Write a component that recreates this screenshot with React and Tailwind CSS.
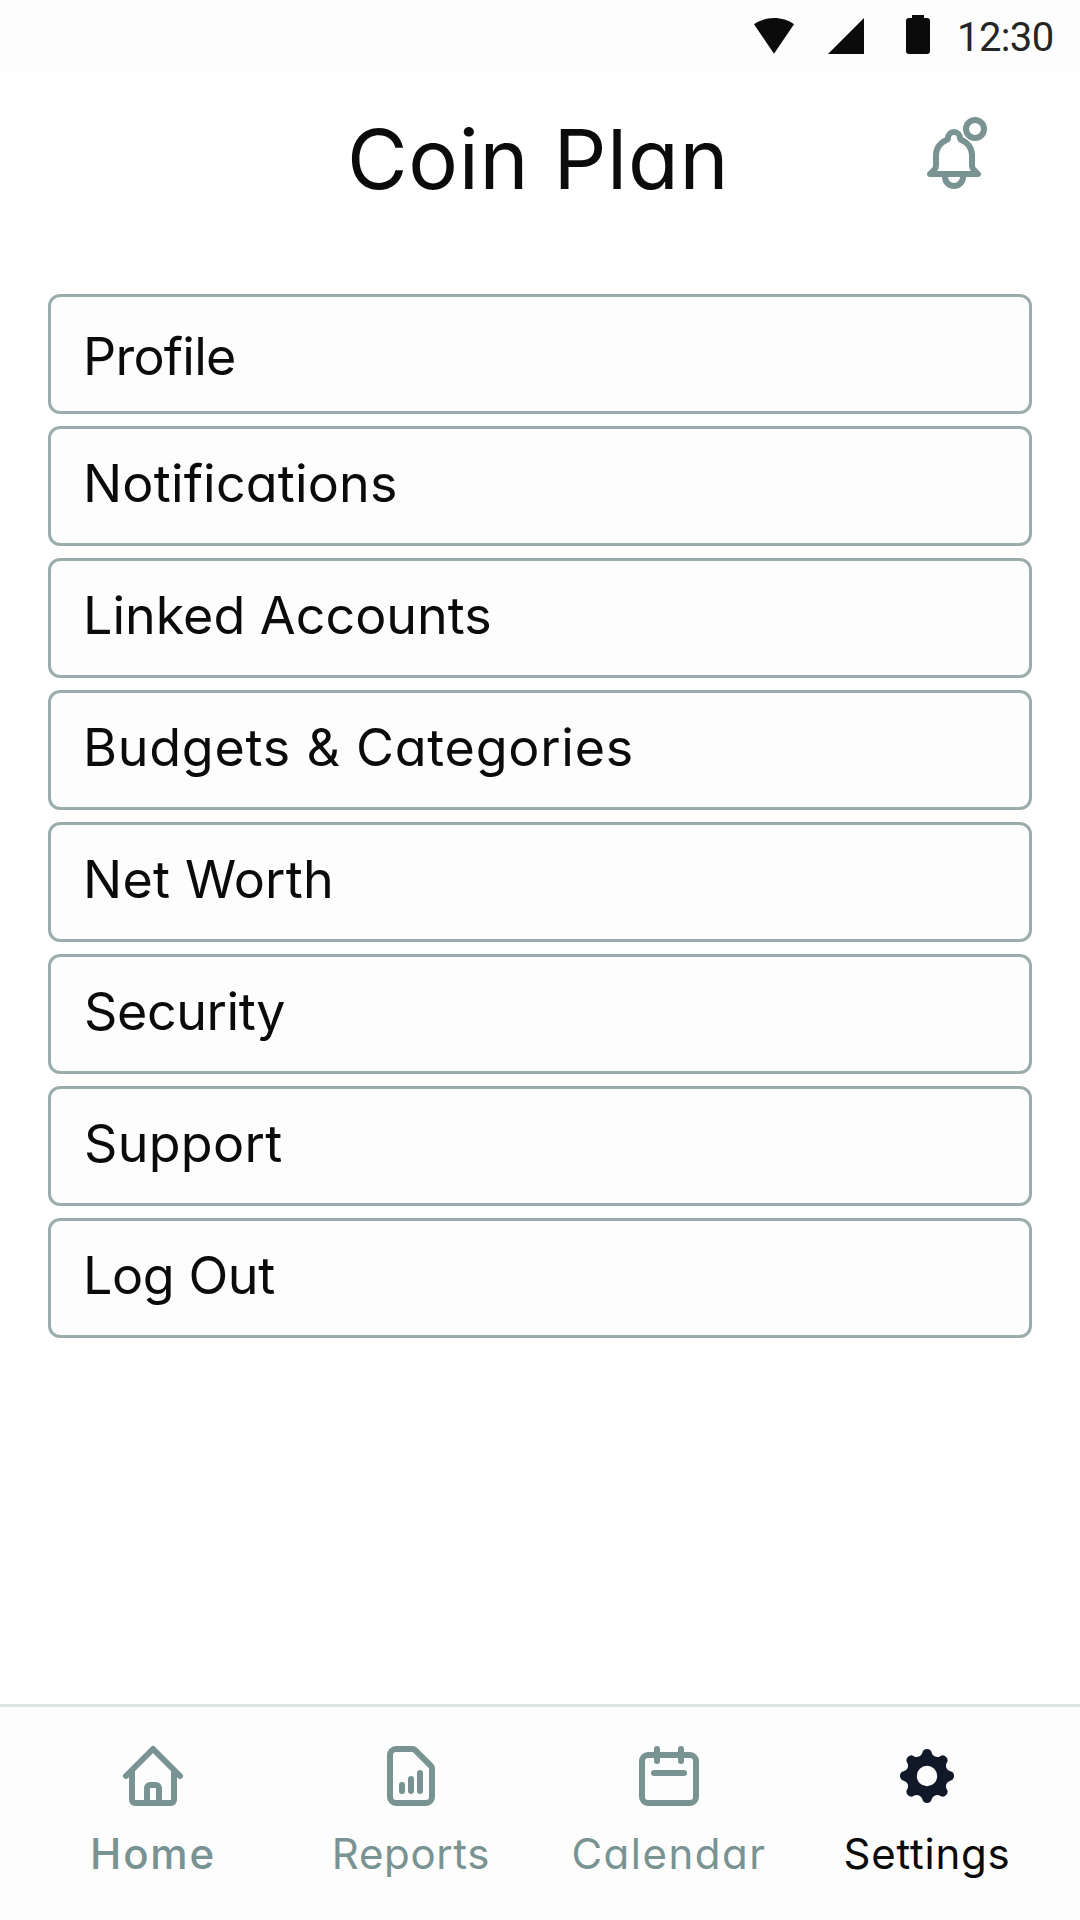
const settingsItems = [
  { label: "Profile", text: "pt-1.5 pl-8 tracking-[-0.75px]" },
  { label: "Notifications", text: "pb-1 pl-8 tracking-[0.18px]" },
  { label: "Linked Accounts", text: "pb-1 pl-8 tracking-[0px]" },
  { label: "Budgets & Categories", text: "pb-1 pl-8 tracking-[0.75px]" },
  { label: "Net Worth", text: "pb-1 pl-8 tracking-[0.2px]" },
  { label: "Security", text: "pb-1 pl-[33px] tracking-[-0.4px]" },
  { label: "Support", text: "pb-1 pl-[33px] tracking-[0.3px]" },
  { label: "Log Out", text: "pb-1 pl-8 tracking-[-0.4px]" },
];

function LineIcon({ className = "", children }) {
  return (
    <svg
      viewBox="0 0 24 24"
      className={`size-[72px] shrink-0 ${className}`}
      fill="none"
      stroke="#789391"
      strokeWidth="2"
      strokeLinecap="round"
      strokeLinejoin="round"
      aria-hidden="true"
    >
      {children}
    </svg>
  );
}

function HomeIcon() {
  return (
    <LineIcon>
      <path d="M3 12l9-9 9 9" />
      <path d="M5 10.5V20a1 1 0 0 0 1 1h12a1 1 0 0 0 1-1v-9.5" />
      <path d="M10 21v-5a1 1 0 0 1 1-1h2a1 1 0 0 1 1 1v5" />
    </LineIcon>
  );
}

function ReportsIcon() {
  return (
    <LineIcon>
      <path d="M5 5a2 2 0 0 1 2-2h5.59a1 1 0 0 1 .7.29l5.42 5.42a1 1 0 0 1 .29.7V19a2 2 0 0 1-2 2H7a2 2 0 0 1-2-2z" />
      <path d="M9 17v-2M12 17v-4M15 17v-6" />
    </LineIcon>
  );
}

function CalendarIcon() {
  return (
    <LineIcon>
      <rect x="3" y="5" width="18" height="16" rx="2" />
      <path d="M8 3v4M16 3v4M7 11h10" />
    </LineIcon>
  );
}

// Eight rounded teeth joined by concave arcs.
function gearPath() {
  const toothR = 1.6;
  const toothD = 7.4;
  const valleyR = 1.9;
  const valleyD = 8.9;
  const at = (d, deg) => {
    const a = (deg * Math.PI) / 180;
    return [12 + d * Math.sin(a), 12 - d * Math.cos(a)];
  };
  const mix = (a, b) => {
    const t = toothR / (toothR + valleyR);
    return [a[0] + (b[0] - a[0]) * t, a[1] + (b[1] - a[1]) * t]
      .map((n) => n.toFixed(3))
      .join(" ");
  };
  let d = "";
  for (let i = 0; i < 8; i++) {
    const tooth = at(toothD, i * 45);
    const before = mix(tooth, at(valleyD, i * 45 - 22.5));
    const after = mix(tooth, at(valleyD, i * 45 + 22.5));
    d += i === 0 ? `M${before}` : `A${valleyR} ${valleyR} 0 0 0 ${before}`;
    d += `A${toothR} ${toothR} 0 0 1 ${after}`;
  }
  d += `A${valleyR} ${valleyR} 0 0 0 ${mix(at(toothD, 0), at(valleyD, -22.5))}Z`;
  return `${d}M15.4 12a3.4 3.4 0 1 0-6.8 0a3.4 3.4 0 1 0 6.8 0Z`;
}

function SettingsIcon() {
  return (
    <svg viewBox="0 0 24 24" className="size-[72px] shrink-0" aria-hidden="true">
      <path d={gearPath()} fill="#111827" fillRule="evenodd" />
    </svg>
  );
}

function BellIcon() {
  return (
    <LineIcon className="mb-3.5">
      <circle cx="19" cy="4" r="3" />
      <path d="M4 19l1.5-1.5Q6 17 6 16.2V12.7C6 10.4 7.5 8.4 9.5 7.65Q10 7.45 10 7a2 2 0 0 1 4 0Q14 7.45 14.5 7.65C16.5 8.4 18 10.4 18 12.7V16.2Q18 17 18.5 17.5L20 19Z" />
      <path d="M9 20a3 3 0 0 0 6 0" strokeLinecap="butt" />
    </LineIcon>
  );
}

function StatusBar() {
  return (
    <div className="flex h-[72px] items-center bg-[#fdfdfd] pl-[754px] text-[#0a0b0a]">
      <svg viewBox="0 0 40 36" className="h-9 w-10 shrink-0" fill="currentColor" aria-hidden="true">
        <path d="M20 35.7L0 6.2C5.5 2.2 12.5 0 20 0S34.5 2.2 40 6.2Z" />
      </svg>
      <svg viewBox="0 0 36 36" className="ml-[34px] size-9 shrink-0" fill="currentColor" aria-hidden="true">
        <path d="M36 0V36H0Z" />
      </svg>
      <svg viewBox="0 0 24 39" className="mb-[3px] ml-[42px] h-[39px] w-6 shrink-0" fill="currentColor" aria-hidden="true">
        <path d="M6 0h12v3h3a3 3 0 0 1 3 3v30a3 3 0 0 1-3 3H3a3 3 0 0 1-3-3V6a3 3 0 0 1 3-3h3z" />
      </svg>
      <span className="ml-[27px] pt-1 font-['Roboto',sans-serif] text-[40px] leading-[48px] tracking-[-0.6px] text-[#242625]">
        12:30
      </span>
    </div>
  );
}

const tabs = [
  { label: "Home", Icon: HomeIcon, text: "font-medium tracking-[1.8px] text-[#789391]" },
  { label: "Reports", Icon: ReportsIcon, text: "tracking-[0.65px] text-[#789391]" },
  { label: "Calendar", Icon: CalendarIcon, text: "tracking-[1.5px] text-[#789391]" },
  { label: "Settings", Icon: SettingsIcon, text: "tracking-[0.8px] text-[#0a0b0a]" },
];

export default function App() {
  return (
    <div className="flex h-[1920px] w-[1080px] flex-col bg-white font-['Inter',sans-serif] text-[#0a0b0a] [font-feature-settings:'cv11'_1,'ss03'_1]">
      <StatusBar />
      <header className="flex h-44 items-center justify-between pr-[90px] pl-[347px]">
        <h1 className="pb-0.5 text-[83px] leading-none tracking-[0.7px] whitespace-nowrap">Coin Plan</h1>
        <BellIcon />
      </header>
      <main className="mt-[46px] flex flex-col gap-3 px-12">
        {settingsItems.map(({ label, text }) => (
          <button
            key={label}
            className={`flex h-[120px] items-center rounded-xl border-3 border-[#9aacab] bg-[#fdfdfd] text-left text-[52px] leading-none whitespace-nowrap ${text}`}
          >
            {label}
          </button>
        ))}
      </main>
      <nav className="mt-auto grid h-[216px] grid-cols-4 border-t-3 border-[#dee4e3] bg-[#fdfdfd] px-6 pt-[33px]">
        {tabs.map(({ label, Icon, text }) => (
          <a key={label} className="flex flex-col items-center gap-3">
            <Icon />
            <span className={`text-[42px] leading-[60px] whitespace-nowrap ${text}`}>{label}</span>
          </a>
        ))}
      </nav>
    </div>
  );
}
